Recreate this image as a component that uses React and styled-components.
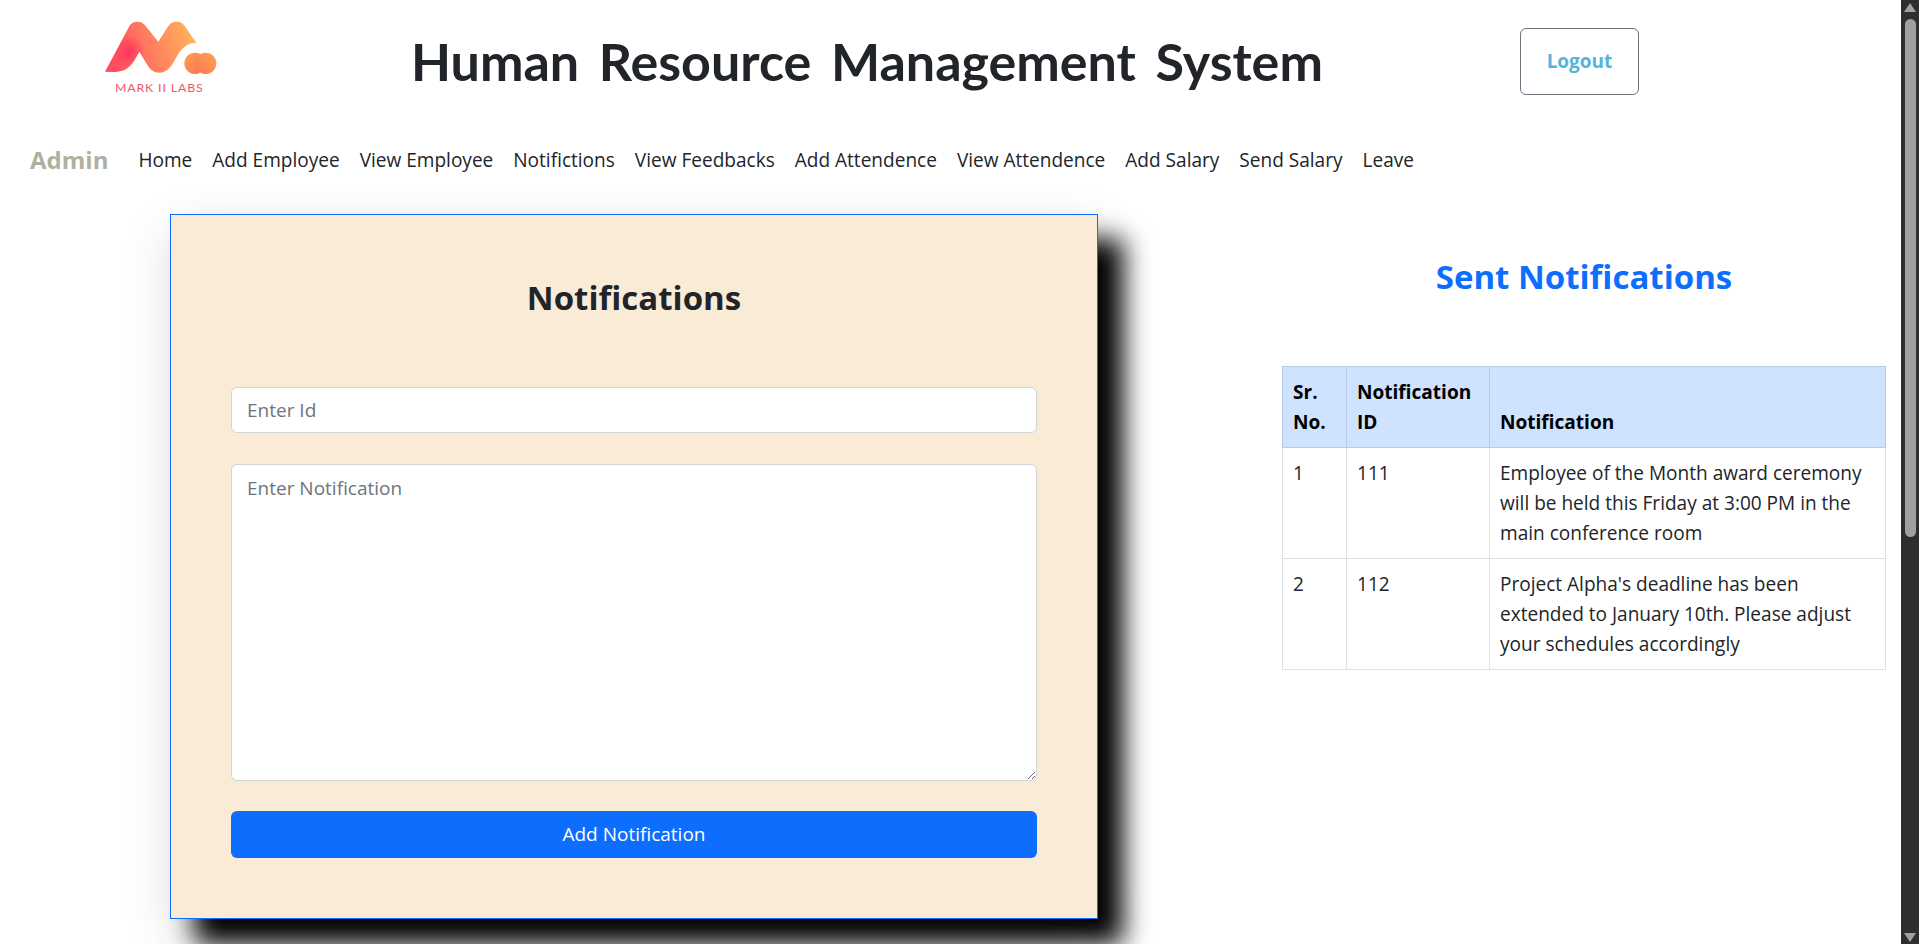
import React from "react";
import styled, { createGlobalStyle } from "styled-components";

const GlobalStyle = createGlobalStyle`
	* {
		box-sizing: border-box;
	}
	body {
		margin: 0;
		background: #fff;
		color: #212529;
		font-family: "Open Sans", "Noto Sans", sans-serif;
		font-size: 19.06px;
		line-height: 1.5;
	}
`;

const Page = styled.div`
	min-height: 1658px;
`;

const ScrollTrack = styled.div`
	position: fixed;
	top: 0;
	right: 0;
	bottom: 0;
	width: 18px;
	background: #2e2e2e;
`;

const ScrollThumb = styled.div`
	position: absolute;
	top: 19px;
	left: 4px;
	width: 11px;
	height: 518px;
	background: #a0a0a0;
	border-radius: 6px;
`;

const ScrollArrow = styled.div`
	position: absolute;
	left: 3px;
	${(p) => (p.$down ? "bottom: 2px;" : "top: 3px;")}
	border-left: 6.5px solid transparent;
	border-right: 6.5px solid transparent;
	${(p) => (p.$down ? "border-top" : "border-bottom")}: 9px solid #a0a0a0;
`;

const Header = styled.header`
	display: flex;
	align-items: center;
	height: 122px;
`;

const LogoBox = styled.div`
	align-self: flex-start;
	width: 411px;
	padding-left: 80px;
`;

const Title = styled.h1`
	margin: 0;
	width: 1109px;
	font-family: "Lato", sans-serif;
	font-size: 52px;
	font-weight: 700;
	line-height: 1.2;
	word-spacing: 7px;
`;

const LogoutButton = styled.button`
	width: 119px;
	height: 67px;
	background: #fff;
	border: 1px solid #6c757d;
	border-radius: 6px;
	color: #55b4d9;
	font: 700 19px "Open Sans", sans-serif;
`;

const Nav = styled.nav`
	display: flex;
	align-items: center;
	height: 76px;
	padding-left: 30px;
`;

const Brand = styled.span`
	margin-right: 20px;
	font-size: 24px;
	font-weight: 700;
	color: #b0b0a0;
`;

const NavLink = styled.a`
	padding: 0 10px;
	color: #212529;
`;

const Content = styled.main`
	display: flex;
	align-items: flex-start;
	padding: 16px 16px 0 170px;
`;

const Card = styled.section`
	width: 928px;
	height: 705px;
	padding: 0 60px;
	background: #faebd7;
	border: 1px solid #0d6efd;
	box-shadow: 25px 25px 25px #000, 0 16px 48px rgba(0, 0, 0, 0.12);
`;

const CardTitle = styled.h2`
	margin: 63px 0 69px;
	font-size: 33px;
	font-weight: 700;
	line-height: 1.2;
	text-align: center;
`;

const Field = styled.input`
	display: block;
	width: 100%;
	height: 46px;
	margin-bottom: 31px;
	padding: 6px 15px;
	border: 1px solid #ced4da;
	border-radius: 6px;
	font: 19px "Open Sans", sans-serif;
	&::placeholder {
		color: #6c757d;
	}
`;

const AreaField = styled.textarea`
	display: block;
	width: 100%;
	height: 317px;
	margin-bottom: 30px;
	padding: 10px 15px;
	border: 1px solid #ced4da;
	border-radius: 6px;
	font: 19px "Open Sans", sans-serif;
	&::placeholder {
		color: #6c757d;
	}
`;

const SubmitButton = styled.button`
	display: block;
	width: 100%;
	height: 47px;
	background: #0d6efd;
	border: 0;
	border-radius: 6px;
	color: #fff;
	font: 19px "Open Sans", sans-serif;
`;

const Side = styled.section`
	width: 604px;
	margin-left: 184px;
`;

const SideTitle = styled.h2`
	margin: 43px 0 69px;
	font-size: 33px;
	font-weight: 700;
	line-height: 1.2;
	text-align: center;
	color: #0d6efd;
`;

const Table = styled.table`
	width: 100%;
	border-collapse: collapse;
	line-height: 30px;
`;

const HeadCell = styled.th`
	width: ${(p) => p.$width || "auto"};
	padding: 10px;
	background: #cfe2ff;
	border: 1px solid #b6cbe8;
	color: #000;
	font-weight: 700;
	text-align: left;
	vertical-align: bottom;
`;

const Cell = styled.td`
	padding: 10px;
	border: 1px solid #dee2e6;
	vertical-align: top;
`;

const rows = [
	{ id: "111", text: "Employee of the Month award ceremony will be held this Friday at 3:00 PM in the main conference room" },
	{ id: "112", text: "Project Alpha's deadline has been extended to January 10th. Please adjust your schedules accordingly" },
];

const links = ["Home", "Add Employee", "View Employee", "Notifictions", "View Feedbacks", "Add Attendence", "View Attendence", "Add Salary", "Send Salary", "Leave"];

const Logo = () => (
	<svg width="180" height="110" viewBox="0 0 540 330">
		<defs>
			<linearGradient id="mark" gradientUnits="userSpaceOnUse" x1="90" y1="180" x2="340" y2="110">
				<stop offset="0" stopColor="#ff4a60" />
				<stop offset="1" stopColor="#ffb35c" />
			</linearGradient>
			<radialGradient id="blob" gradientUnits="userSpaceOnUse" cx="145" cy="155" r="50">
				<stop offset="0" stopColor="#ff3560" />
				<stop offset="1" stopColor="#ff3560" stopOpacity="0" />
			</radialGradient>
			<linearGradient id="dotA" x1="0" y1="0" x2="1" y2="1">
				<stop offset="0" stopColor="#ffa050" />
				<stop offset="1" stopColor="#ff6f5a" />
			</linearGradient>
			<linearGradient id="dotB" x1="1" y1="0" x2="0" y2="1">
				<stop offset="0" stopColor="#ffa450" />
				<stop offset="1" stopColor="#ff7656" />
			</linearGradient>
		</defs>
		<path id="markShape" d="M75 215 L150 75 Q158 65 172 65 Q188 65 197 78 L235 125 L265 78 Q274 65 290 65 Q306 65 314 78 L350 130 C325 125 305 145 290 170 C275 198 262 218 238 218 C218 218 208 205 198 188 L178 155 C160 185 150 216 100 216 Z" fill="url(#mark)" />
		<path d="M75 215 L150 75 Q158 65 172 65 Q188 65 197 78 L235 125 L265 78 Q274 65 290 65 Q306 65 314 78 L350 130 C325 125 305 145 290 170 C275 198 262 218 238 218 C218 218 208 205 198 188 L178 155 C160 185 150 216 100 216 Z" fill="url(#blob)" />
		<circle cx="345" cy="190" r="32" fill="url(#dotA)" />
		<circle cx="377" cy="190" r="32" fill="url(#dotB)" />
		<text x="105" y="277" fontFamily="Lato, sans-serif" fontSize="37" textLength="263" fill="#f0566c">MARK II LABS</text>
	</svg>
);

const App = () => {
	return (
		<Page>
			<GlobalStyle />
			<Header>
				<LogoBox><Logo /></LogoBox>
				<Title>Human Resource Management System</Title>
				<LogoutButton>Logout</LogoutButton>
			</Header>
			<Nav>
				<Brand>Admin</Brand>
				{links.map((l) => <NavLink key={l}>{l}</NavLink>)}
			</Nav>
			<Content>
				<Card>
					<CardTitle>Notifications</CardTitle>
					<Field placeholder="Enter Id" />
					<AreaField placeholder="Enter Notification" />
					<SubmitButton>Add Notification</SubmitButton>
				</Card>
				<Side>
					<SideTitle>Sent Notifications</SideTitle>
					<Table>
						<thead>
							<tr>
								<HeadCell $width="64px">Sr. No.</HeadCell>
								<HeadCell $width="143px">Notification ID</HeadCell>
								<HeadCell>Notification</HeadCell>
							</tr>
						</thead>
						<tbody>
							{rows.map((r, i) => (
								<tr key={r.id}>
									<Cell>{i + 1}</Cell>
									<Cell>{r.id}</Cell>
									<Cell>{r.text}</Cell>
								</tr>
							))}
						</tbody>
					</Table>
				</Side>
			</Content>
			<ScrollTrack>
				<ScrollArrow />
				<ScrollThumb />
				<ScrollArrow $down />
			</ScrollTrack>
		</Page>
	);
};

export default App;
